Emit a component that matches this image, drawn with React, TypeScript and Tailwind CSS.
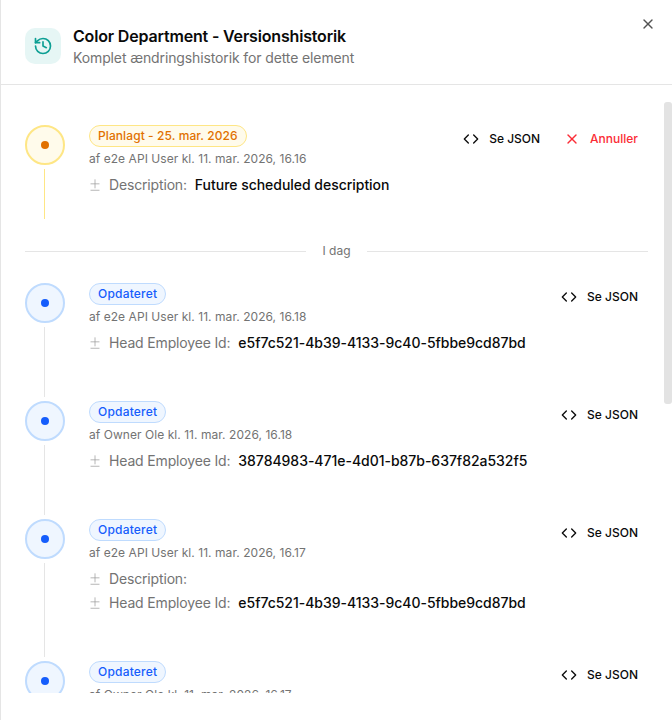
import { Code, Diff, History, X } from "lucide-react";

type Change = { label: string; value?: string };
type Entry = { by: string; changes: Change[]; h: string };

const entries: Entry[] = [
  { by: "af e2e API User kl. 11. mar. 2026, 16.18", changes: [{ label: "Head Employee Id:", value: "e5f7c521-4b39-4133-9c40-5fbbe9cd87bd" }], h: "h-[118px]" },
  { by: "af Owner Ole kl. 11. mar. 2026, 16.18", changes: [{ label: "Head Employee Id:", value: "38784983-471e-4d01-b87b-637f82a532f5" }], h: "h-[118px]" },
  { by: "af e2e API User kl. 11. mar. 2026, 16.17", changes: [{ label: "Description:" }, { label: "Head Employee Id:", value: "e5f7c521-4b39-4133-9c40-5fbbe9cd87bd" }], h: "h-[142px]" },
  { by: "af Owner Ole kl. 11. mar. 2026, 16.17", changes: [{ label: "Description:" }], h: "h-[118px]" },
];

function ChangeRow({ c }: { c: Change }) {
  return (
    <div className="flex h-6 items-center text-sm">
      <span className="-ml-px flex w-[21px] text-[#9a9a9a]"><Diff size={14} strokeWidth={1.25} /></span>
      <span className="tracking-[-0.16px] text-[#737373]">{c.label}</span>
      {c.value && <span className="ml-2 font-medium tracking-[-0.03px] text-[#0a0a0a]">{c.value}</span>}
    </div>
  );
}

function JsonButton() {
  return (
    <button className="flex h-7 items-center gap-2.5 text-xs font-medium text-[#0a0a0a]">
      <Code size={16} />
      Se JSON
    </button>
  );
}

function Row({ e }: { e: Entry }) {
  return (
    <div className={`flex gap-6 ${e.h}`}>
      <div className="flex w-10 shrink-0 flex-col items-center">
        <div className="flex size-10 items-center justify-center rounded-full border-2 border-[#bfdbfe] bg-[#eff6ff]">
          <div className="size-2 rounded-full bg-[#155dfc]" />
        </div>
        <div className="mt-1 mr-px mb-1 w-px flex-1 bg-[#e5e5e5]" />
      </div>
      <div className="min-w-0 flex-1">
        <div className="flex items-start justify-between">
          <div>
            <span className="flex h-[22px] w-fit items-center rounded-full border border-[#bfdbfe] bg-[#eff6ff] px-2 text-xs font-medium tracking-[0.2px] text-[#155dfc]">Opdateret</span>
            <div className="mt-[4px] text-xs leading-4 tracking-[0.05px] text-[#737373]">{e.by}</div>
          </div>
          <div className="mr-2.5"><JsonButton /></div>
        </div>
        <div className="mt-[6px]">
          {e.changes.map((c) => <ChangeRow key={c.label} c={c} />)}
        </div>
      </div>
    </div>
  );
}

export default function App() {
  return (
    <div className="relative h-[720px] w-[672px] overflow-hidden border-l border-[#e5e5e5] bg-white font-['Inter',sans-serif]">
      <header className="flex h-[85px] items-center gap-3 border-b border-[#e5e5e5] px-6 pt-[7px]">
        <div className="flex size-9 items-center justify-center rounded-[10px] bg-[#e6f6f5]">
          <History size={20} className="text-[#0d9f94]" />
        </div>
        <div>
          <div className="text-base leading-6 font-semibold tracking-[-0.17px] text-[#0a0a0a]">Color Department - Versionshistorik</div>
          <div className="text-sm leading-5 tracking-[-0.12px] text-[#737373]">Komplet ændringshistorik for dette element</div>
        </div>
      </header>
      <button className="absolute top-4 right-4 text-[#525252]"><X size={16} /></button>

      <div className="h-[608px] overflow-hidden px-6 pt-10">
        <div className="flex h-[94px] gap-6">
          <div className="flex w-10 shrink-0 flex-col items-center">
            <div className="flex size-10 items-center justify-center rounded-full border-2 border-[#fee685] bg-[#fffbeb]">
              <div className="size-2 rounded-full bg-[#e17100]" />
            </div>
            <div className="mt-1 mr-px w-px flex-1 bg-[#fee685]" />
          </div>
          <div className="min-w-0 flex-1">
            <div className="flex items-start justify-between">
              <div>
                <span className="flex h-[22px] w-fit items-center rounded-full border border-[#fee685] bg-[#fffbeb] px-2 text-xs font-medium tracking-[0.09px] text-[#e17100]">Planlagt - 25. mar. 2026</span>
                <div className="mt-[4px] text-xs leading-4 tracking-[0.05px] text-[#737373]">af e2e API User kl. 11. mar. 2026, 16.16</div>
              </div>
              <div className="mr-2.5 flex items-center gap-6">
                <JsonButton />
                <button className="flex h-7 items-center gap-2.5 text-xs font-medium text-[#fb2c36]">
                  <X size={16} />
                  Annuller
                </button>
              </div>
            </div>
            <div className="mt-[6px]"><ChangeRow c={{ label: "Description:", value: "Future scheduled description" }} /></div>
          </div>
        </div>
        <div className="mt-[24px] mb-[24px] flex h-4 items-center gap-4">
          <div className="h-px flex-1 bg-[#e5e5e5]" />
          <span className="text-xs text-[#737373]">I dag</span>
          <div className="h-px flex-1 bg-[#e5e5e5]" />
        </div>
        {entries.map((e, i) => <Row key={i} e={e} />)}
      </div>
      <div className="absolute top-[102px] right-0 h-[302px] w-2 rounded-t-[3px] rounded-b-[3px] bg-[#e3e3e3]" />
    </div>
  );
}
